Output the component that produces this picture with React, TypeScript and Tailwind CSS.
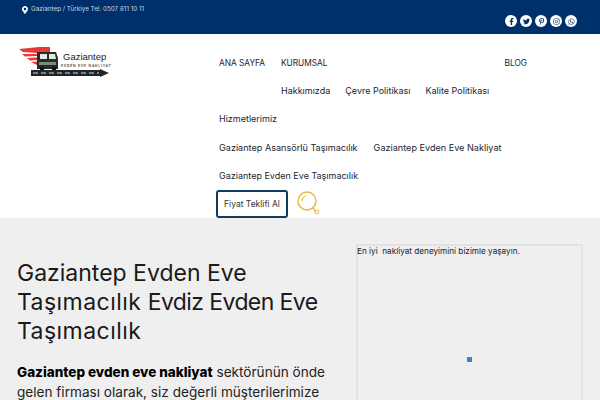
import { FaFacebookF, FaTwitter, FaPinterestP, FaInstagram, FaWhatsapp, FaMapMarkerAlt } from "react-icons/fa";

const font = "font-['Inter','Noto_Sans',sans-serif]";

const socials = [FaFacebookF, FaTwitter, FaPinterestP, FaInstagram, FaWhatsapp];

const TopBar = () => {
  return (
    <div className="h-[34px] bg-[#00306b] flex justify-between pl-[21px] pr-[23px] shrink-0">
      <div className="flex items-center gap-[2px] h-[20px] text-[6.3px] text-[#c9d2e0]">
        <FaMapMarkerAlt className="size-[8px] text-white" />
        <span>Gaziantep / Türkiye Tel: 0507 611 10 11</span>
      </div>
      <div className="flex items-center gap-[3px] mt-[15px] h-[12px]">
        {socials.map((Icon, i) => (
          <div key={i} className="size-[12px] rounded-full bg-white flex items-center justify-center">
            <Icon className="size-[7px] text-[#00306b]" />
          </div>
        ))}
      </div>
    </div>
  );
};

const Logo = () => {
  return (
    <div className="relative w-[92px] h-[36px] mt-[11px] ml-[19px]">
      <svg viewBox="0 0 92 36" className="absolute inset-0 size-full">
        <path d="M0 4 L20 2 H31 V7 H18 V8 L4 7 Z" fill="#e8393a" />
        <path d="M3 9 L18 9 V11 L6 11.5 Z" fill="#e8393a" />
        <path d="M8 13 L18 12.5 V15 L11 15.5 Z" fill="#e8393a" />
        <path d="M12 17 L18 16.5 V20 Z" fill="#e8393a" />
        <path d="M18 7 H37 L39 13 V24 H18 Z" fill="#262d28" />
        <path d="M21 9 H28 V14 H21 Z M30 9 H36 L37 14 H30 Z" fill="#e6e8e6" />
        <path d="M20 17 H37 V20 H20 Z" fill="#7d8a80" />
        <circle cx="23" cy="24" r="2.2" fill="#111" />
        <circle cx="35" cy="24" r="2.2" fill="#111" />
        <path d="M12 25 H81 V24 L90 28 L81 32 V31 H12 Z" fill="#20262a" />
        <path d="M14 28 H80" stroke="#fff" strokeWidth="0.8" strokeDasharray="5 3" />
      </svg>
      <div className="absolute left-[44px] top-[6px] font-['Liberation_Sans',sans-serif] text-[9.5px] leading-[12px] text-[#222]">Gaziantep</div>
      <div className="absolute left-[42px] top-[19px] text-[3.5px] leading-[4px] font-semibold tracking-[0.7px] text-[#444] whitespace-nowrap">
        EVDEN EVE NAKLİYAT
      </div>
    </div>
  );
};

const Nav = () => {
  return (
    <div className="ml-[108px] w-[308px] text-[9px] text-[#1c2530] pt-[23px]">
      <div className="flex h-[12px] items-center text-[8.3px]">
        <span className="w-[62px]">ANA SAYFA</span>
        <span>KURUMSAL</span>
        <span className="ml-auto">BLOG</span>
      </div>
      <div className="flex h-[12px] items-center gap-[15px] mt-[16px] pl-[62px]">
        <span>Hakkımızda</span>
        <span>Çevre Politikası</span>
        <span>Kalite Politikası</span>
      </div>
      <div className="flex h-[12px] items-center mt-[16px]">Hizmetlerimiz</div>
      <div className="flex h-[12px] items-center gap-[16px] mt-[17px] text-[9.1px]">
        <span>Gaziantep Asansörlü Taşımacılık</span>
        <span>Gaziantep Evden Eve Nakliyat</span>
      </div>
      <div className="flex h-[12px] items-center mt-[16px]">Gaziantep Evden Eve Taşımacılık</div>
      <div className="flex items-start mt-[8px] -ml-[3px]">
        <button className="w-[72px] h-[28px] border-2 border-[#123a5e] rounded-[3px] bg-white text-[8.5px] text-[#333]">
          Fiyat Teklifi Al
        </button>
        <svg viewBox="0 0 24 24" className="size-[24px] ml-[9px] mt-[1px]" fill="none">
          <circle cx="10" cy="10" r="9" stroke="#e5b93f" strokeWidth="1.4" />
          <path d="M5 10a5 5 0 0 1 4-5" stroke="#e5b93f" strokeWidth="1" />
          <path d="M16 17 L19 21" stroke="#e5b93f" strokeWidth="1.4" />
          <circle cx="20" cy="21" r="2" stroke="#e5b93f" strokeWidth="1" />
        </svg>
      </div>
    </div>
  );
};

export default function App() {
  return (
    <div className={`w-[600px] h-[400px] overflow-hidden flex flex-col bg-[#efefef] ${font}`}>
      <TopBar />
      <div className="h-[184px] bg-white flex shrink-0">
        <Logo />
        <Nav />
      </div>
      <div className="flex pl-[17px] pr-[17px] pt-[26px]">
        <div className="w-[322px] shrink-0 pt-[15px]">
          <h1 className="text-[23px] leading-[29px] text-[#1a1a1a]">
            Gaziantep Evden Eve <span className="tracking-[0.45px]">Taşımacılık</span> <span className="tracking-[-0.6px]">Evdiz Evden Eve</span> <span className="tracking-[0.45px]">Taşımacılık</span>
          </h1>
          <p className="mt-[16px] text-[13.6px] leading-[20px] text-[#222]">
            <strong className="font-extrabold text-[13.5px] text-black">Gaziantep evden eve nakliyat</strong> sektörünün önde gelen firması olarak, siz değerli müşterilerimize
          </p>
        </div>
        <div className="ml-[17px] w-[227px] h-[200px] border-2 border-[#e2e2e2] -mb-[60px] shrink-0">
          <div className="text-[8.2px] leading-[10px] -ml-px text-[#222] whitespace-pre">En iyi  nakliyat deneyimini bizimle yaşayın.</div>
          <div className="flex justify-center mt-[101px]">
            <div className="size-[5px] bg-[#3d85c6]" />
          </div>
        </div>
      </div>
    </div>
  );
}
